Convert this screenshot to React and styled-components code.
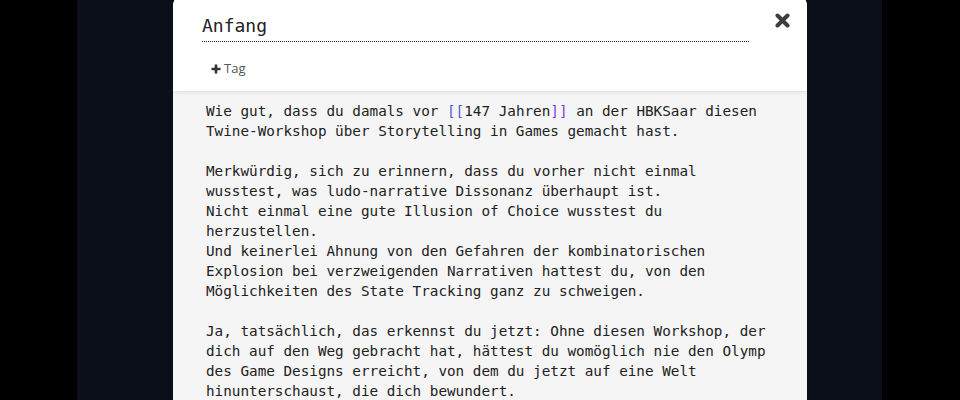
import React from 'react'
import styled, { createGlobalStyle } from 'styled-components'

const GlobalStyle = createGlobalStyle`
html, body {
  margin: 0;
  padding: 0;
  background: #000;
  height: 400px;
  overflow: hidden;
}
`

const passage = [
  { text: 'Wie gut, dass du damals vor ' },
  { text: '[[', kind: 'open' },
  { text: '147 Jahren' },
  { text: ']]', kind: 'close' },
  {
    text:
      ' an der HBKSaar diesen\nTwine-Workshop über Storytelling in Games gemacht hast.\n\n' +
      'Merkwürdig, sich zu erinnern, dass du vorher nicht einmal\n' +
      'wusstest, was ludo-narrative Dissonanz überhaupt ist.\n' +
      'Nicht einmal eine gute Illusion of Choice wusstest du\n' +
      'herzustellen.\n' +
      'Und keinerlei Ahnung von den Gefahren der kombinatorischen\n' +
      'Explosion bei verzweigenden Narrativen hattest du, von den\n' +
      'Möglichkeiten des State Tracking ganz zu schweigen.\n\n' +
      'Ja, tatsächlich, das erkennst du jetzt: Ohne diesen Workshop, der\n' +
      'dich auf den Weg gebracht hat, hättest du womöglich nie den Olymp\n' +
      'des Game Designs erreicht, von dem du jetzt auf eine Welt\n' +
      'hinunterschaust, die dich bewundert.',
  },
]

export default function App() {
  return (
    <>
      <GlobalStyle />
      <Stage>
        <Dialog>
          <Header>
            <TitleRow>
              <TitleInput>Anfang</TitleInput>
              <CloseButton aria-label="Schließen">
                <svg width="15" height="15" viewBox="0 0 15 15">
                  <path d="M2.5 2.5 L12.5 12.5 M12.5 2.5 L2.5 12.5" stroke="#3d3d3d" strokeWidth="4" strokeLinecap="round" fill="none" />
                </svg>
              </CloseButton>
            </TitleRow>
            <TagButton>
              <svg width="10" height="10" viewBox="0 0 10 10">
                <path d="M5 0.5 V9.5 M0.5 5 H9.5" stroke="#333" strokeWidth="2.6" fill="none" />
              </svg>
              Tag
            </TagButton>
          </Header>
          <Body>
            <PassageText>
              {passage.map((p, i) => (
                <Chunk key={i} $kind={p.kind}>{p.text}</Chunk>
              ))}
            </PassageText>
          </Body>
        </Dialog>
      </Stage>
    </>
  )
}

const Stage = styled.div`
margin-left: 77px;
width: 805px;
height: 400px;
background: #0a0f19;
display: flex;
padding-left: 96px;
box-sizing: border-box;
`

const Dialog = styled.div`
width: 634px;
height: 420px;
margin-top: -6px;
background: #f5f5f5;
border-radius: 12px 12px 0 0;
overflow: hidden;
display: flex;
flex-direction: column;
`

const Header = styled.div`
background: #fff;
padding: 18px 17px 0 29px;
height: 97px;
flex-shrink: 0;
box-sizing: border-box;
box-shadow: 0 1px 4px rgba(0, 0, 0, 0.1);
position: relative;
z-index: 1;
`

const TitleRow = styled.div`
display: flex;
align-items: flex-start;
`

const TitleInput = styled.div`
width: 547px;
font-family: "DejaVu Sans Mono", monospace;
font-size: 18px;
line-height: 26px;
color: #222;
padding-top: 1px;
padding-bottom: 2px;
border-bottom: 1px dotted #222;
`

const CloseButton = styled.div`
margin-left: 26px;
margin-top: 1px;
width: 15px;
height: 15px;
display: flex;
`

const TagButton = styled.div`
display: inline-flex;
align-items: center;
gap: 3px;
margin-top: 17px;
margin-left: 9px;
font-family: "Open Sans", sans-serif;
font-size: 13px;
color: #555;
svg { margin-top: 1px; }
`

const Body = styled.div`
padding: 10px 0 0 33px;
`

const PassageText = styled.div`
font-family: "DejaVu Sans Mono", monospace;
font-size: 14.3px;
line-height: 20px;
color: #222;
white-space: pre;
`

const Chunk = styled.span`
color: ${(p) => (p.$kind === 'open' ? '#5a55e6' : p.$kind === 'close' ? '#7e3fe0' : 'inherit')};
`
